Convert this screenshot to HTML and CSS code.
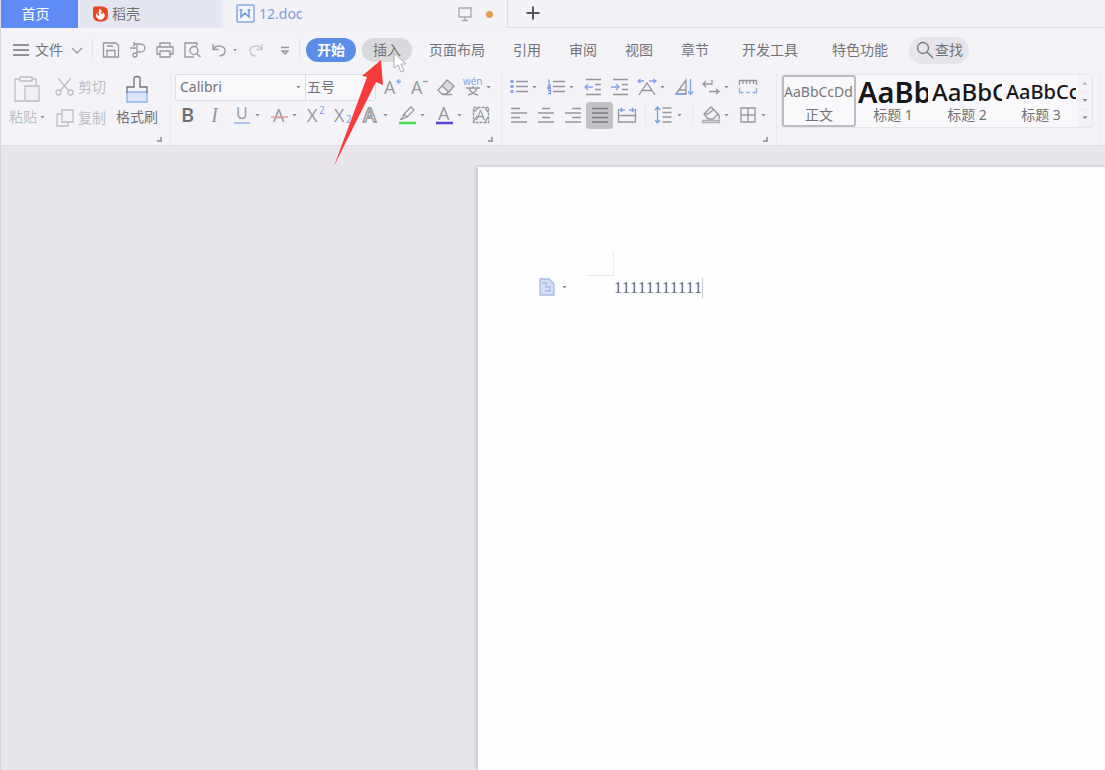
FILE: index.html
```html
<!DOCTYPE html>
<html lang="zh-CN">
<head>
<meta charset="utf-8">
<title>12.doc</title>
<link rel="stylesheet" href="styles.css">
</head>
<body>
<div class="app">
  <nav class="tabs" aria-label="文档标签">
    <button class="tab tab-home">首页</button>
    <button class="tab tab-store">
      <svg class="logo" viewBox="0 0 16 18"><rect x="0" y="1" width="16" height="16" rx="6" fill="#ee4423"/><rect x="0" y="1" width="8" height="8" rx="2" fill="#ee4423"/><path d="M7 3c4 3 1 4 2 6 1 0 2-1 2-2 4 5-1 8-3 8-4 0-6-4-4-7 0 2 1 3 2 3 1-2-1-4 1-8z" fill="#fff"/></svg>
      <span>稻壳</span>
    </button>
    <button class="tab tab-doc">
      <svg class="logo-w" viewBox="0 0 20 20"><rect x="1" y="1" width="17" height="17" rx="1" fill="#f3f6fd" stroke="#86a8e6" stroke-width="1.5"/><path d="M5 6v7l4-4 4 4V6M3.500 6h3M11.500 6h3" fill="none" stroke="#6f97e4" stroke-width="1.500"/></svg>
      <span class="doc-name">12.doc</span>
      <svg class="icon screen" viewBox="0 0 20 20"><path d="M4 4h12v9H4zM10 13v3M7 16.500h6" stroke="#aaabb0"/></svg>
      <span class="dot"></span>
    </button>
    <button class="tab-add" aria-label="新建"><svg class="icon" viewBox="0 0 20 20"><path d="M10 3.500v13M3.500 10h13" stroke="#55565c" stroke-width="2"/></svg></button>
  </nav>

  <div class="menu">
    <button class="file"><svg class="icon" viewBox="0 0 20 20"><path d="M2 5h16M2 10h16M2 15h16"/></svg><span>文件</span><svg class="icon chev" viewBox="0 0 20 20"><path d="M5 8l5 5 5-5"/></svg></button>
    <div class="quick">
      <button class="tool" aria-label="保存"><svg class="icon" viewBox="0 0 20 20"><path d="M2.500 3h12.500l2.500 2.500V17h-15zM6 17v-6.500h8V17M6 6h6"/></svg></button>
      <button class="tool" aria-label="输出"><svg class="icon" viewBox="0 0 20 20"><path d="M7 4h5a5 4 0 0 1 0 8H9M9 5v8M5 2.500L7.500 4 5 6M2 8h6"/><circle cx="7" cy="15" r="2"/></svg></button>
      <button class="tool" aria-label="打印"><svg class="icon" viewBox="0 0 20 20"><path d="M5 7V3h10v4M5 14H2V7h16v7h-3M5 11h10v6H5z"/></svg></button>
      <button class="tool" aria-label="打印预览"><svg class="icon" viewBox="0 0 20 20"><path d="M15 6V3H3v14h9M14.500 13.500L18.500 17"/><circle cx="12" cy="10.500" r="4"/></svg></button>
      <button class="tool" aria-label="撤销"><svg class="icon" viewBox="0 0 20 20"><path d="M4 4v5.500h5.500M4.500 9a6 5 0 1 1 6 7"/></svg></button>
      <span class="caret small"></span>
      <button class="tool faint" aria-label="恢复"><svg class="icon" viewBox="0 0 20 20"><path d="M16 4v5.500h-5.500M15.500 9a6 5 0 1 0-6 7"/></svg></button>
      <button class="tool" aria-label="更多"><svg class="icon" viewBox="0 0 20 20"><path d="M6 7.500h8M7 11l3 3 3-3z"/></svg></button>
    </div>
    <div class="sections">
      <button class="sec on">开始</button>
      <button class="sec hover">插入</button>
      <button class="sec">页面布局</button>
      <button class="sec">引用</button>
      <button class="sec">审阅</button>
      <button class="sec">视图</button>
      <button class="sec">章节</button>
      <button class="sec wide">开发工具</button>
      <button class="sec wide">特色功能</button>
    </div>
    <button class="find"><svg class="icon" viewBox="0 0 20 20"><circle cx="8" cy="8" r="5.500"/><path d="M12 12l6 6"/></svg><span>查找</span></button>
  </div>

  <div class="ribbon">
    <section class="group clip">
      <div class="clip-body">
        <button class="big faint"><svg class="big-icon" viewBox="0 0 30 30"><path d="M8 5H3v22h9M20 5h4v6M8 3h12v4H8z"/><path d="M13 12h14v15H13z" fill="#efeff3"/></svg><span class="with-caret">粘贴<i class="caret"></i></span></button>
        <div class="pair faint">
          <button class="row"><svg class="icon" viewBox="0 0 20 20"><path d="M3 1l11 13M16 1L5 14"/><circle cx="3.500" cy="15.500" r="2.500"/><circle cx="15.500" cy="15.500" r="2.500"/></svg>剪切</button>
          <button class="row"><svg class="icon" viewBox="0 0 20 20"><path d="M7 2h11v12H7zM7 6H2v12h11v-4"/></svg>复制</button>
        </div>
        <button class="big"><svg class="big-icon" viewBox="0 0 30 30"><path d="M5 18h20v10H5z" fill="#dbe6fb" stroke="#8fb0ee"/><path d="M5 19v-6h7V3.500q3-2 6 0V13h7v6"/></svg><span>格式刷</span></button>
      </div>
      <i class="launch"></i>
    </section>

    <section class="group">
      <div class="line">
        <div class="combo">
          <select class="font-name" aria-label="字体"><option>Calibri</option></select>
          <span class="caret combo-caret"></span>
          <select class="font-size" aria-label="字号"><option>五号</option></select>
        </div>
        <button class="tool" aria-label="增大字号"><svg class="icon" viewBox="0 0 20 20"><text x="2" y="17" class="g18">A</text><path d="M14 4.500h5M16.500 2v5" stroke="#86a8ee"/></svg></button>
        <button class="tool" aria-label="减小字号"><svg class="icon" viewBox="0 0 20 20"><text x="2" y="17" class="g18">A</text><path d="M14 4.500h5"/></svg></button>
        <button class="tool" aria-label="清除格式"><svg class="icon" viewBox="0 0 20 20"><path d="M11 3l7 6-5 6-7-6z" fill="#dcdce0"/><path d="M6 9l-4 4 4 4h4l3-3M6 17.500h10"/></svg></button>
        <button class="tool split" aria-label="拼音指南"><svg class="icon" viewBox="0 0 20 20"><text x="0" y="8" class="g10 blue">wén</text><path d="M3 11h14M10 9v2M5 18c5-1 8-4 9-7M15 18c-5-1-8-4-9-7"/></svg><i class="caret"></i></button>
      </div>
      <div class="line">
        <button class="tool bold">B</button>
        <button class="tool ital">I</button>
        <button class="tool split" aria-label="下划线"><svg class="icon" viewBox="0 0 20 20"><text x="4" y="14" class="g16">U</text><path d="M2 18h16" stroke="#8fa9e6"/></svg><i class="caret"></i></button>
        <button class="tool split" aria-label="删除线"><svg class="icon" viewBox="0 0 20 20"><text x="4" y="17" class="g18">A</text><path d="M2 12h17" stroke="#ea9a9e" stroke-width="1.500"/></svg><i class="caret"></i></button>
        <button class="tool" aria-label="上标"><svg class="icon" viewBox="0 0 20 20"><text x="1" y="17" class="g18">X</text><text x="13" y="9" class="g10 blue">2</text></svg></button>
        <button class="tool" aria-label="下标"><svg class="icon" viewBox="0 0 20 20"><text x="1" y="17" class="g18">X</text><text x="13" y="18" class="g10 blue">2</text></svg></button>
        <button class="tool split" aria-label="文字效果"><svg class="icon" viewBox="0 0 20 20"><text x="3" y="17" class="g20 hollow">A</text></svg><i class="caret"></i></button>
        <button class="tool split" aria-label="突出显示"><svg class="icon" viewBox="0 0 20 20"><path d="M5 14l2-5 7-7 3 3-7 7-5 2zM3 14h3M7 9l3 3"/><path d="M2 18h17" stroke="#4bdc55" stroke-width="2.500"/></svg><i class="caret"></i></button>
        <button class="tool split" aria-label="字体颜色"><svg class="icon" viewBox="0 0 20 20"><text x="4" y="15" class="g18">A</text><path d="M2 18h17" stroke="#5a42cf" stroke-width="2.500"/></svg><i class="caret"></i></button>
        <button class="tool" aria-label="字符底纹"><svg class="icon" viewBox="0 0 20 20"><rect x="2.500" y="2.500" width="15" height="15" stroke-dasharray="3 1"/><text x="5" y="15" class="g14">A</text><path d="M3 7l4-4M3 16l3-5M14 17l3-5M14 3l3 4"/></svg></button>
      </div>
      <i class="launch"></i>
    </section>

    <section class="group">
      <div class="line">
        <button class="tool split" aria-label="项目符号"><svg class="icon" viewBox="0 0 20 20"><path d="M7 4.500h12M7 9.500h12M7 14.500h12"/><path d="M1.500 4.500h3M1.500 9.500h3M1.500 14.500h3" stroke="#86a0ea" stroke-width="3"/></svg><i class="caret"></i></button>
        <button class="tool split" aria-label="编号"><svg class="icon" viewBox="0 0 20 20"><path d="M7 4.500h12M7 9.500h12M7 14.500h12"/><path d="M3 2.500v4M2 8h2v2H2v1.500h3M2 13.500h2.500v3H2" stroke="#7d97e8"/></svg><i class="caret"></i></button>
        <button class="tool" aria-label="减少缩进"><svg class="icon" viewBox="0 0 20 20"><path d="M3 2.500h15M12 7.500h6M12 12.500h6M3 17.500h15"/><path d="M2 10h8M5 7l-3 3 3 3" stroke="#86a0ea"/></svg></button>
        <button class="tool" aria-label="增加缩进"><svg class="icon" viewBox="0 0 20 20"><path d="M3 2.500h15M12 7.500h6M12 12.500h6M3 17.500h15"/><path d="M1 10h8M6 7l3 3-3 3" stroke="#86a0ea"/></svg></button>
        <button class="tool split" aria-label="中文版式"><svg class="icon" viewBox="0 0 20 20"><path d="M2 18L10 6l8 12M5.500 13.500h9"/><path d="M1 4h6M3.500 2L1 4l2.500 2M12 4h7M16.500 2L19 4l-2.500 2" stroke="#86a0ea"/></svg><i class="caret"></i></button>
        <button class="tool" aria-label="排序"><svg class="icon" viewBox="0 0 20 20"><path d="M2 17L12 3v14zM5 13h7"/><path d="M16.500 2v15M14 14.500l2.500 3 2.500-3M2 17h10" stroke="#7ea6e8"/></svg></button>
        <button class="tool split" aria-label="换行"><svg class="icon" viewBox="0 0 20 20"><path d="M11 3v4H2M5 4L2 7l3 3M8 14.500h10M15 12l3 2.500-3 2.500"/></svg><i class="caret"></i></button>
        <button class="tool" aria-label="标尺"><svg class="icon" viewBox="0 0 20 20"><path d="M1.500 8V3.500h17V8M5 4v3M8.500 4v3M12 4v3M15.500 4v3"/><path d="M1.500 11v4.500h4M8 15.500h4M18.500 11v4.500h-4" stroke="#9aaee0"/></svg></button>
      </div>
      <div class="line">
        <button class="tool" aria-label="左对齐"><svg class="icon" viewBox="0 0 20 20"><path d="M2 3.500h9M2 8h16M2 12.500h9M2 17h16"/></svg></button>
        <button class="tool" aria-label="居中"><svg class="icon" viewBox="0 0 20 20"><path d="M6 3.500h8M2 8h16M6 12.500h8M2 17h16"/></svg></button>
        <button class="tool" aria-label="右对齐"><svg class="icon" viewBox="0 0 20 20"><path d="M9 3.500h9M2 8h16M9 12.500h9M2 17h16"/></svg></button>
        <button class="tool pressed" aria-label="两端对齐"><svg class="icon" viewBox="0 0 20 20"><path d="M2 3.500h16M2 8h16M2 12.500h16M2 17h16" stroke="#7a7b7f" stroke-width="1.500"/></svg></button>
        <button class="tool" aria-label="分散对齐"><svg class="icon" viewBox="0 0 20 20"><path d="M1.500 4v13h17V4M2 10.500h16"/><path d="M3 5h5M5 3L3 5l2 2M12 5h5M15 3l2 2-2 2" stroke="#86a0ea"/></svg></button>
        <i class="rule"></i>
        <button class="tool split" aria-label="行距"><svg class="icon" viewBox="0 0 20 20"><path d="M8.500 3h9M8.500 7.500h9M8.500 12h9M8.500 17h9"/><path d="M3.500 2v16M1 5l2.500-3L6 5M1 15l2.500 3L6 15" stroke="#6ea2e2"/></svg><i class="caret"></i></button>
        <i class="rule"></i>
        <button class="tool split" aria-label="底纹"><svg class="icon" viewBox="0 0 20 20"><path d="M3 9l7-7 7 7-5 5H7zM3 9l4 0 5-4M17 9q3 4 0 5"/><path d="M1.500 15.500h17v2h-17z" stroke="#b0b0b5"/></svg><i class="caret"></i></button>
        <button class="tool split" aria-label="边框"><svg class="icon" viewBox="0 0 20 20"><path d="M3 3h14v14H3zM10 3v14M3 10h14"/></svg><i class="caret"></i></button>
      </div>
      <i class="launch"></i>
    </section>

    <section class="group styles-group">
      <div class="gallery">
        <button class="style chosen"><span class="sample s0">AaBbCcDd</span><span>正文</span></button>
        <button class="style"><span class="sample s1">AaBb</span><span>标题 1</span></button>
        <button class="style"><span class="sample s2">AaBbC</span><span>标题 2</span></button>
        <button class="style"><span class="sample s3">AaBbCc</span><span>标题 3</span></button>
        <div class="scroller">
          <button aria-label="上一行"><i class="caret up"></i></button>
          <button aria-label="下一行"><i class="caret"></i></button>
          <button aria-label="展开"><i class="caret"></i></button>
        </div>
      </div>
    </section>
  </div>

  <main class="workspace">
    <article class="page">
      <button class="paste-opt" aria-label="粘贴选项"><svg class="icon" viewBox="0 0 20 20"><path d="M3 2h9l5 5v11H3z" fill="#d5e0f7" stroke="#a5b9e8"/><path d="M5 6h4v4h4v4H8" stroke="#a5b9e8"/></svg><i class="caret"></i></button>
      <div class="body-text"><i class="crop"></i><p class="para">11111111111</p></div>
    </article>
  </main>

  <svg class="pointer" viewBox="0 0 16 22"><path d="M2 1v15l4-3 3 7 3-1-3-7h5z" fill="#fff" stroke="#aeaeb2"/></svg>
  <svg class="arrow" viewBox="0 0 52 108"><path d="M48 1l2 25-7-3L1 107 34 18l-5-1z" fill="#f93b3c"/></svg>
</div>
</body>
</html>
```

FILE: styles.css
```css
* { box-sizing: border-box; }

body {
  margin: 0;
  font: 14px/20px "Noto Sans", "Noto Sans CJK SC", sans-serif;
  color: #727378;
  background: #e8e6ea;
}

button, select {
  font: inherit;
  color: inherit;
  background: none;
  border: 0;
  padding: 0;
  margin: 0;
}

.app {
  position: relative;
  display: flex;
  flex-direction: column;
  min-height: 100vh;
  overflow: hidden;
  border-left: 1px solid #d9d9de;
}

.icon {
  flex: none;
  width: 20px;
  height: 20px;
  fill: none;
  stroke: currentColor;
  stroke-width: 1.3;
  overflow: visible;
}

svg text { fill: currentColor; stroke: none; font-family: "Open Sans", sans-serif; font-weight: 400; }
svg .blue { fill: #7f9bea; }
svg .hollow { fill: #f4f4f8; stroke: currentColor; font-weight: 600; }
.g10 { font-size: 10px; }
.g14 { font-size: 14px; }
.g16 { font-size: 16px; }
.g18 { font-size: 18px; }
.g20 { font-size: 20px; }

.caret {
  flex: none;
  width: 5px;
  height: 3px;
  background: #8b8c91;
  clip-path: polygon(0 0, 100% 0, 50% 100%);
}
.caret.up { clip-path: polygon(50% 0, 100% 100%, 0 100%); background: #b5b5ba; }

/* Document tabs */
.tabs { display: flex; height: 28px; background: #f3f3f7; }
.tab { display: flex; align-items: center; }
.tab-home { width: 77px; justify-content: center; padding-right: 8px; background: #5f8bf8; color: #fff; }
.tab-store { width: 146px; padding-left: 13px; gap: 4px; background: #e4e6f0; border-right: 3px solid #ececf3; border-left: 2px solid #ececf3; }
.tab-doc { width: 284px; padding: 0 14px 0 12px; border-right: 1px solid #dddde3; color: #7d9bdc; gap: 3px; }
.doc-name { flex: 1; text-align: left; }
.logo { width: 15px; height: 18px; }
.logo-w { width: 20px; height: 20px; }
.screen { margin-right: 8px; }
.dot { width: 7px; height: 7px; border-radius: 50%; background: #e39a55; }
.tab-add { flex: 1; display: flex; align-items: center; padding: 0 0 2px 15px; border-bottom: 1px solid #e0e0e8; }

/* Menu bar */
.menu { display: flex; align-items: center; height: 45px; padding-bottom: 1px; background: #f4f4f8; }
.file { display: flex; align-items: center; width: 92px; padding-left: 10px; gap: 4px; height: 24px; border-right: 1px solid #e6e6eb; }
.chev { color: #9a9ba0; }
.quick { display: flex; align-items: center; width: 207px; padding-left: 4px; border-right: 1px solid #e6e6eb; height: 24px; }
.quick .tool:last-child { margin-left: 2px; }
.small { width: 4px; margin: 0 5px 0 1px; }
.faint { color: #bdbec3; }
.sections { display: flex; gap: 6px; padding-left: 6px; }
.sec { height: 24px; padding: 0 11px; border-radius: 12px; white-space: nowrap; }
.on { background: #5a8de8; color: #fff; font-weight: 700; }
.hover { background: #dadadd; }
.wide { margin-left: 5px; }
.sec.wide ~ .wide { margin-left: 6px; }
.find { display: flex; align-items: center; height: 27px; margin-left: 10px; padding: 0 6px; border-radius: 14px; background: #e6e5eb; }

/* Tool ribbon */
.ribbon { display: flex; height: 73px; background: #f4f4f8; border-bottom: 1px solid #dedde2; }
.group { position: relative; flex: none; padding: 0 5px 0 3px; border-right: 1px solid #eaeaef; }
.line { display: flex; align-items: center; height: 28px; }
.tool { display: flex; align-items: center; justify-content: center; flex: none; width: 27px; height: 27px; color: #96979c; }
.tool.faint { color: #c3c4c9; }
.split { width: 37px; justify-content: flex-start; padding-left: 4px; gap: 3px; }
.pressed { background: #c3c3c6; border-radius: 3px; }
.bold { font: 600 20px/24px "Open Sans", sans-serif; color: #6c6d72; }
.ital { font: italic 300 20px/24px "Liberation Serif", serif; }
.rule { width: 1px; height: 24px; margin: 0 4px 0 5px; background: #e8e8ed; }
.launch {
  position: absolute;
  right: 8px;
  bottom: 3px;
  width: 5px;
  height: 5px;
  border: solid #a3a4a9;
  border-width: 0 2px 2px 0;
}

.clip { width: 170px; padding: 0 4px 0 8px; }
.clip-body { display: flex; gap: 10px; }
.big { display: flex; flex-direction: column; align-items: center; white-space: nowrap; }
.big-icon { width: 30px; height: 30px; margin: 1px 0 3px; fill: none; stroke: currentColor; stroke-width: 1.3; }
.with-caret { display: flex; align-items: center; gap: 3px; }
.pair { display: flex; flex-direction: column; gap: 11px; padding-top: 4px; }
.row { display: flex; align-items: center; gap: 3px; white-space: nowrap; }

.combo { display: flex; align-items: center; width: 201px; height: 27px; margin: 0 2px 0 1px; border: 1px solid #dcdce1; border-radius: 3px; background: #f9f9fb; }
.combo select { appearance: none; height: 25px; }
.font-name { width: 120px; padding-left: 4px; }
.combo-caret { margin-right: 4px; }
.font-size { flex: 1; padding-left: 1px; border-left: 1px solid #dcdce1; }

.styles-group { padding: 1px 6px 0 4px; }
.gallery { display: flex; height: 54px; background: #f9f9fc; border: 1px solid #e6e6eb; border-radius: 3px; }
.style { width: 74px; overflow: hidden; display: flex; flex-direction: column; align-items: center; white-space: nowrap; border: 2px solid transparent; }
.chosen { border-color: #bdbdc1; border-radius: 3px; }
.sample { height: 30px; line-height: 30px; align-self: stretch; text-align: left; color: #17171a; font-weight: 500; overflow: hidden; }
.s0 { color: #77787c; font-weight: 400; }
.s1 { font-size: 29px; font-weight: 600; }
.s2 { font-size: 24px; }
.s3 { font-size: 20px; }
.scroller { display: flex; flex-direction: column; width: 14px; background: #f4f4f8; }
.scroller button { flex: 1; display: flex; align-items: center; justify-content: center; border-bottom: 1px solid #eaeaef; }

/* Document */
.workspace { flex: 1; display: flex; padding: 21px 0 0 477px; background: #e8e6ea; }
.page { flex: 1; display: flex; align-items: flex-start; padding: 84px 0 0 59px; background: #fefefe; box-shadow: -1px 0 4px #b9b8bd; }
.paste-opt { display: flex; align-items: center; gap: 5px; width: 50px; height: 20px; margin-top: 26px; }
.body-text { display: flex; flex-direction: column; align-items: flex-start; }
.crop { width: 27px; height: 25px; border: solid #ececef; border-width: 0 1px 1px 0; }
.para { margin: 2px 0 0 27px; font: 16px/20px "Liberation Serif", serif; font-kerning: none; color: #66666a; border-right: 1px solid #c8c8cc; }

/* Overlays */
.pointer { position: absolute; left: 391px; top: 52px; width: 16px; height: 22px; }
.arrow { position: absolute; left: 332px; top: 59px; width: 52px; height: 108px; }
```
